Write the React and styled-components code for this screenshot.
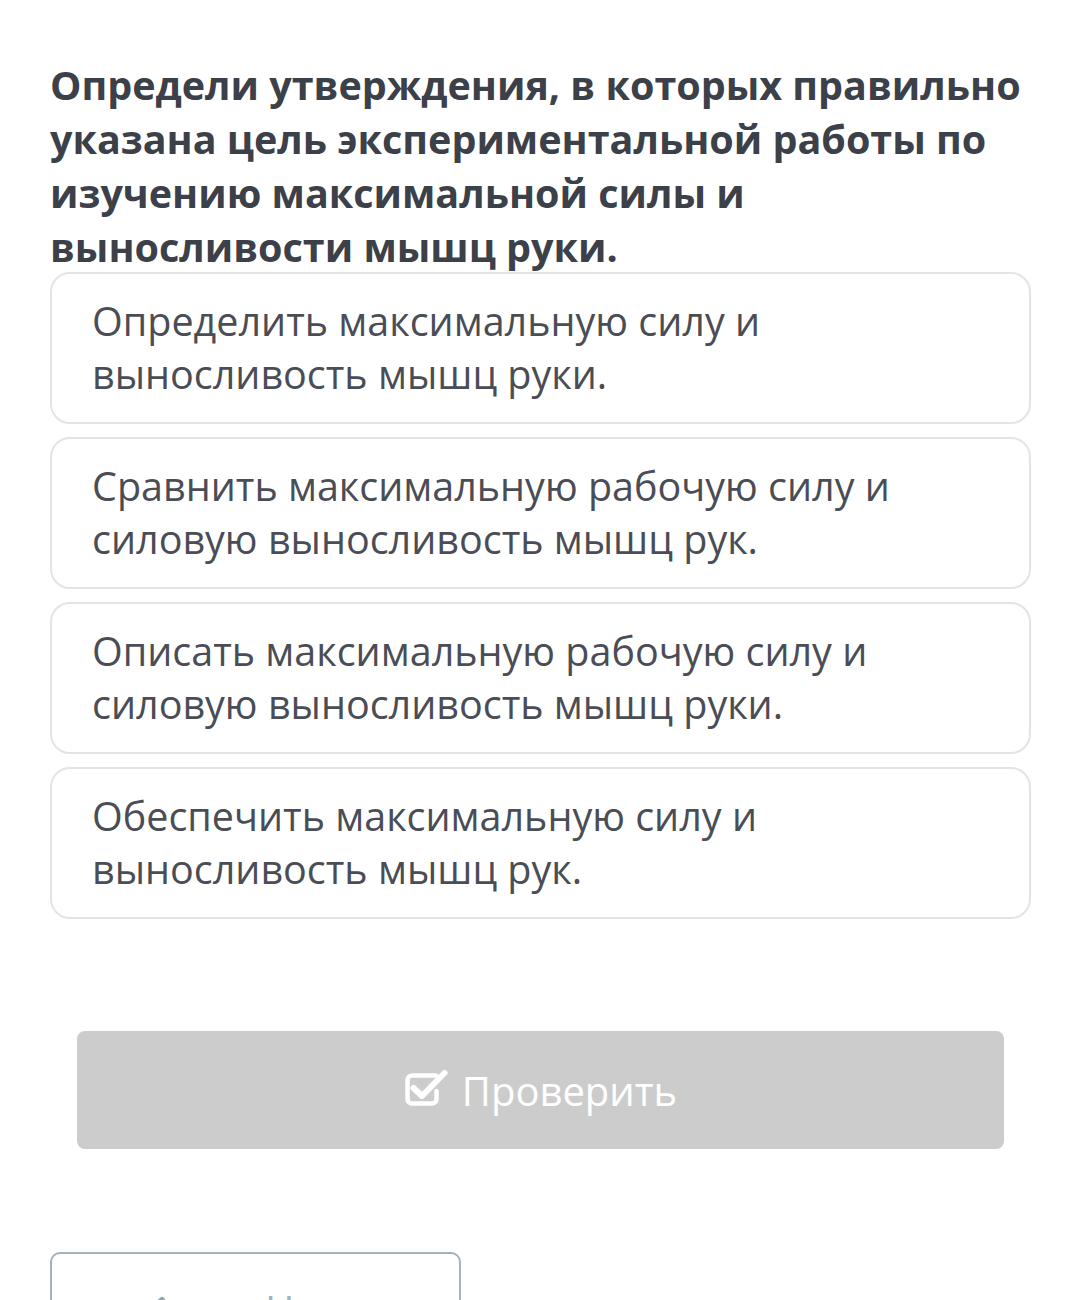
import React from 'react';
import styled, { createGlobalStyle } from 'styled-components';

const GlobalStyle = createGlobalStyle`
  body {
    margin: 0;
    background: #ffffff;
    font-family: "Open Sans", "Liberation Sans", sans-serif;
  }
`;

const OPTIONS = [
  ['Определить максимальную силу и', 'выносливость мышц руки.'],
  ['Сравнить максимальную рабочую силу и', 'силовую выносливость мышц рук.'],
  ['Описать максимальную рабочую силу и', 'силовую выносливость мышц руки.'],
  ['Обеспечить максимальную силу и', 'выносливость мышц рук.'],
];

const Page = styled.main`
  padding: 58px 49px 0 50px;
  height: 1300px;
  box-sizing: border-box;
  overflow: hidden;
`;

const Question = styled.h1`
  margin: 0 0 -2px;
  font-size: 39.5px;
  line-height: 54px;
  font-weight: 700;
  color: #3c4048;
`;

const OptionList = styled.div`
  display: flex;
  flex-direction: column;
  gap: 13px;
`;

const Option = styled.div`
  border: 2px solid #e4e4e4;
  border-radius: 20px;
  padding: 21px 40px;
  font-size: 39.5px;
  line-height: 53px;
  color: #4a4d55;
  background: #fff;
`;

const CheckButton = styled.button`
  display: flex;
  align-items: center;
  justify-content: center;
  gap: 14px;
  margin: 112px 27px 0;
  width: calc(100% - 54px);
  height: 118px;
  border: none;
  border-radius: 8px;
  background: #cccccc;
  color: #ffffff;
  font-family: inherit;
  font-size: 40px;
  padding: 0;
`;

const CheckIcon = styled.svg`
  width: 44px;
  height: 38px;
  margin-top: -4px;
`;

const BackButton = styled.button`
  display: flex;
  align-items: flex-start;
  gap: 85px;
  margin-top: 103px;
  width: 411px;
  height: 100px;
  border: 2px solid #a3b1bc;
  border-radius: 10px;
  background: #fff;
  color: #9fb2c0;
  font-family: inherit;
  font-size: 40px;
  line-height: 54px;
  padding: 29px 0 0 88px;
  box-sizing: border-box;
`;

const BackIcon = styled.svg`
  width: 40px;
  height: 40px;
  margin-top: 13px;
`;

const CheckSquare = () => (
  <CheckIcon viewBox="0 0 44 38" fill="none" stroke="#ffffff">
    <path
      d="M32 6.5 H8 a4.5 4.5 0 0 0 -4.5 4.5 V30 a4.5 4.5 0 0 0 4.5 4.5 H28 a4.5 4.5 0 0 0 4.5 -4.5 V22"
      strokeWidth="4.5"
      strokeLinecap="round"
    />
    <path
      d="M9.5 19 L18 27 L40.5 4"
      strokeWidth="6"
      strokeLinecap="round"
      strokeLinejoin="round"
    />
  </CheckIcon>
);

const ArrowLeft = () => (
  <BackIcon viewBox="0 0 40 40" fill="none" stroke="#8fa5b5" strokeWidth="6" strokeLinecap="round">
    <path d="M22 4 L6 20 L22 36 M6 20 H36" strokeLinejoin="round" />
  </BackIcon>
);

const App = () => (
  <Page>
    <GlobalStyle />
    <Question>
      Определи утверждения, в которых правильно указана цель экспериментальной работы по изучению
      максимальной силы и выносливости мышц руки.
    </Question>
    <OptionList>
      {OPTIONS.map((lines) => (
        <Option key={lines[0]}>
          {lines[0]}
          <br />
          {lines[1]}
        </Option>
      ))}
    </OptionList>
    <CheckButton>
      <CheckSquare />
      Проверить
    </CheckButton>
    <BackButton>
      <ArrowLeft />
      <span>Назад</span>
    </BackButton>
  </Page>
);

export default App;
